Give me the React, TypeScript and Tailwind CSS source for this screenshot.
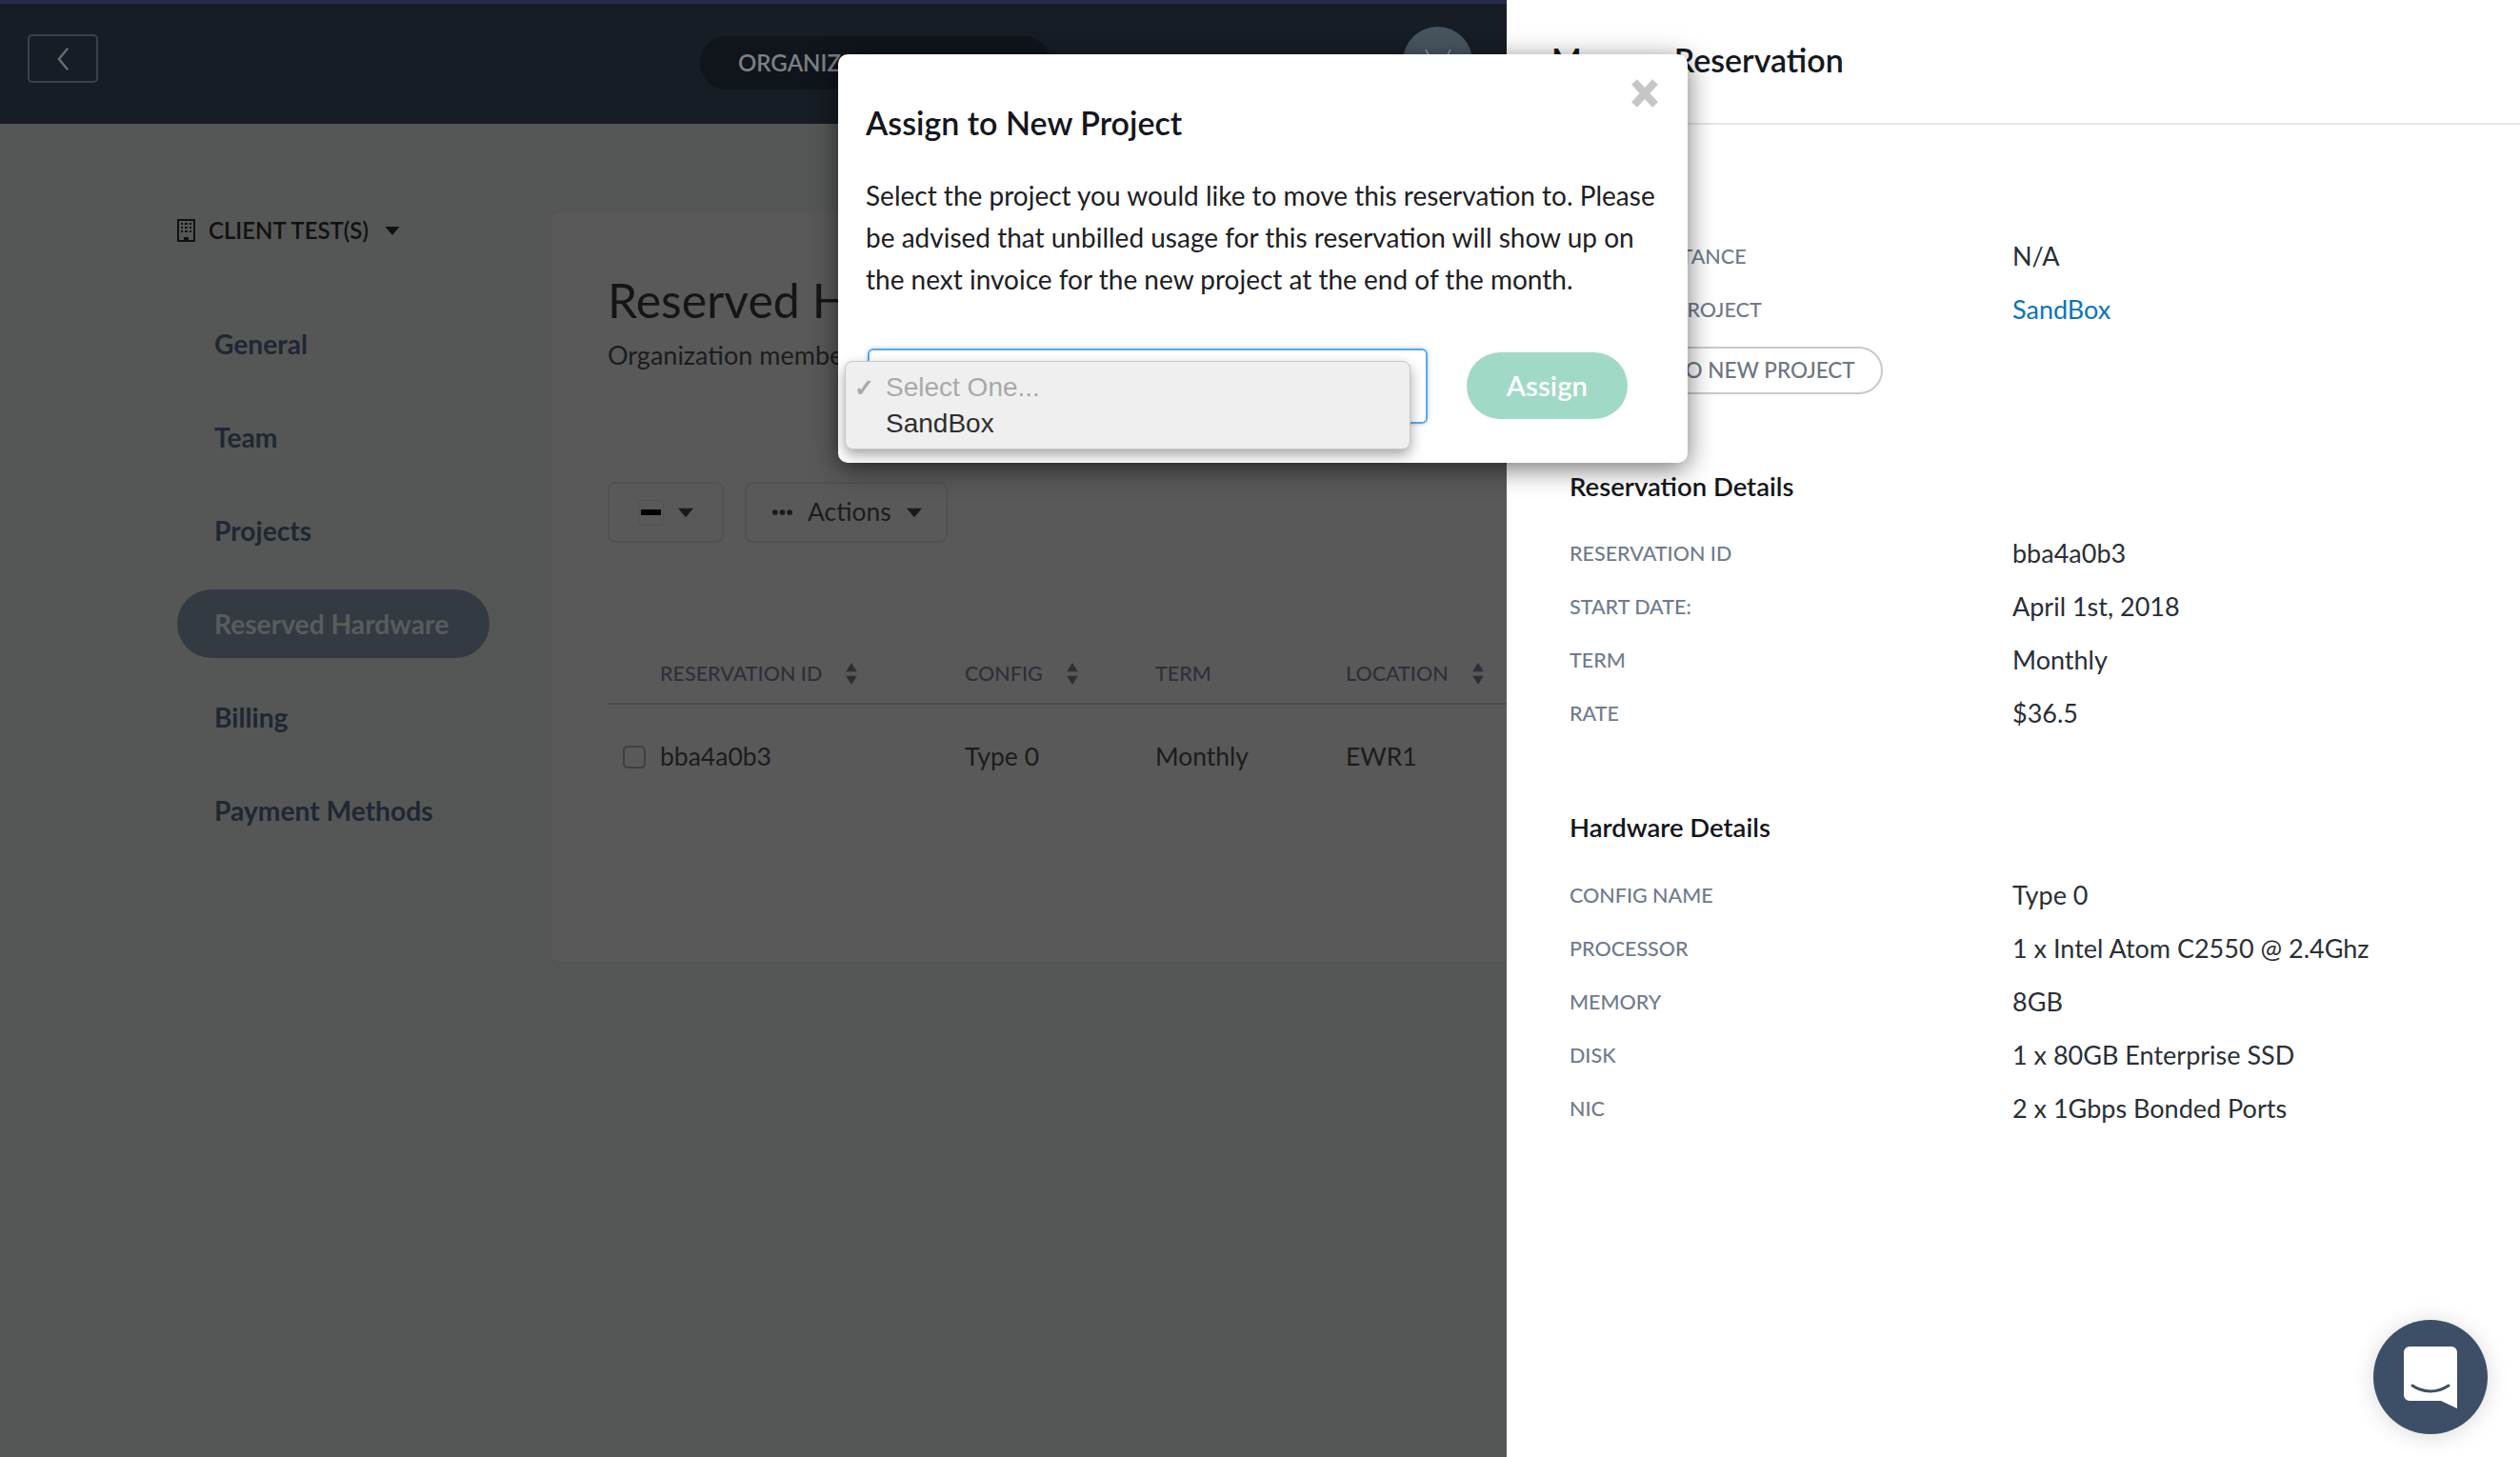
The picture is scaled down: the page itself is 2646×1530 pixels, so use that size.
const Caret = ({ className }: { className: string }) => (
  <svg viewBox="0 0 10 6" className={className} fill="currentColor">
    <path d="M0 0h10L5 6z" />
  </svg>
);

const Sort = () => (
  <svg viewBox="0 0 12 20" className="w-[14px] h-[23px] text-[#2c2f36]" fill="currentColor">
    <path d="M6 0l5 8H1zM6 20l-5-8h10z" />
  </svg>
);

const nav = ["General", "Team", "Projects", "Reserved Hardware", "Billing", "Payment Methods"];

const columns = [
  { name: "RESERVATION ID", w: "w-[320px]", sort: true },
  { name: "CONFIG", w: "w-[200px]", sort: true },
  { name: "TERM", w: "w-[200px]", sort: false },
  { name: "LOCATION", w: "w-[160px]", sort: true },
];

const reservation = [
  ["RESERVATION ID", "bba4a0b3"],
  ["START DATE:", "April 1st, 2018"],
  ["TERM", "Monthly"],
  ["RATE", "$36.5"],
];

const hardware = [
  ["CONFIG NAME", "Type 0"],
  ["PROCESSOR", "1 x Intel Atom C2550 @ 2.4Ghz"],
  ["MEMORY", "8GB"],
  ["DISK", "1 x 80GB Enterprise SSD"],
  ["NIC", "2 x 1Gbps Bonded Ports"],
];

const Row = ({ label, children }: { label: string; children: React.ReactNode }) => (
  <div className="flex items-center h-[56px]">
    <span className="w-[465px] text-[21.5px] font-medium text-[#6f7b8c]">{label}</span>
    <span className="text-[27px] text-[#2a2f36]">{children}</span>
  </div>
);

export default function App() {
  return (
    <div className="relative flex w-[2646px] h-[1530px] overflow-hidden bg-white [font-family:Lato,sans-serif]">
      {/* Dimmed page behind the drawer */}
      <div className="flex flex-col w-[1582px] shrink-0 bg-[#555756]">
        <header className="flex items-start h-[130px] pl-[29px] bg-[#171d25] border-t-4 border-[#272a4d]">
          <button className="flex items-center justify-center mt-[32px] w-[74px] h-[51px] border-2 border-[#3d4249] rounded-[5px] text-[#6a6e73]">
            <svg viewBox="0 0 16 28" className="w-[15px] h-[26px]" fill="none" stroke="currentColor" strokeWidth="2.5">
              <path d="M13 2L3 14l10 12" />
            </svg>
          </button>
          <div className="flex items-center mt-[34px] ml-[632px] w-[368px] h-[56px] pl-[40px] rounded-full bg-[#10151c] text-[24px] font-semibold text-[#7d8084] whitespace-nowrap">
            ORGANIZATION SETTINGS
          </div>
          <span className="mt-[34px] ml-[115px] leading-[56px] text-[24px] font-semibold text-[#7d8084] whitespace-nowrap">PERSONAL SETTINGS</span>
          <div className="flex justify-center mt-[24px] ml-[15px] pt-[22px] w-[73px] h-[73px] rounded-full bg-[#47545f] text-[#9aa2a9]">
            <svg viewBox="0 0 30 30" className="w-[30px] h-[30px]" fill="none" stroke="currentColor" strokeWidth="1.5">
              <path d="M2 2l13 24L28 2" />
            </svg>
          </div>
        </header>

        <div className="flex flex-1 min-h-0">
          <aside className="w-[578px] shrink-0 pl-[186px] pt-[94px]">
            <div className="flex items-center h-[36px] text-[24px] font-semibold text-[#111]">
              <svg viewBox="0 0 19 24" className="w-[19px] h-[24px]" fill="#111">
                <path fillRule="evenodd" d="M0 0h19v24H0zM2 2v20h5v-3h5v3h5V2z" />
                <path d="M4 4h2v2H4zM8 4h3v2H8zM13 4h2v2h-2zM4 8h2v2H4zM8 8h3v2H8zM13 8h2v2h-2zM4 12h2v2H4zM8 12h3v2H8zM13 12h2v2h-2z" />
              </svg>
              <span className="ml-[14px]">CLIENT TEST(S)</span>
              <Caret className="ml-[17px] w-[16px] h-[9px] text-[#111]" />
            </div>
            <nav className="flex flex-col gap-[26px] mt-[65px]">
              {nav.map((item) => {
                const active = item === "Reserved Hardware";
                return (
                  <div
                    key={item}
                    className={`flex items-center w-[328px] h-[72px] pl-[39px] rounded-full text-[28.2px] font-bold whitespace-nowrap ${
                      active ? "bg-[#343a42] text-[#595c5e]" : "text-[#1f2733]"
                    }`}
                  >
                    {item}
                  </div>
                );
              })}
            </nav>
          </aside>

          <main className="flex-1 min-w-0 h-[789px] mt-[92px] pl-[59px] pt-[58px] rounded-tl-[8px] rounded-bl-[8px] bg-[#595959] border border-[#545454] border-r-0 overflow-hidden">
            <h1 className="text-[50px] leading-[68px] text-[#151515] whitespace-nowrap">Reserved Hardware</h1>
            <p className="mt-[6px] text-[27px] leading-[36px] text-[#1c1c1c] whitespace-nowrap">Organization members can manage reservations</p>

            <div className="flex gap-[22px] mt-[115px]">
              <div className="flex items-center w-[122px] h-[64px] pl-[30px] rounded-[8px] border-2 border-[#525252]">
                <span className="flex items-center justify-center w-[27px] h-[27px] rounded-[4px] border border-[#525252]">
                  <span className="w-[21px] h-[6px] bg-black" />
                </span>
                <Caret className="ml-[15px] w-[16px] h-[11px] text-[#1a1a1a]" />
              </div>
              <div className="flex items-center w-[213px] h-[64px] pl-[27px] rounded-[8px] border-2 border-[#525252] text-[26.5px] text-[#1c1c1c]">
                <svg viewBox="0 0 22 6" className="w-[21px] h-[6px]" fill="#1a1a1a">
                  <circle cx="3" cy="3" r="3" />
                  <circle cx="11" cy="3" r="3" />
                  <circle cx="19" cy="3" r="3" />
                </svg>
                <span className="ml-[16px]">Actions</span>
                <Caret className="ml-[16px] w-[16px] h-[11px] text-[#1a1a1a]" />
              </div>
            </div>

            <div className="flex items-center h-[64px] mt-[106px] pl-[55px] border-b-2 border-[#4c4c4c] whitespace-nowrap">
              {columns.map((col) => (
                <div key={col.name} className={`flex items-center gap-[24px] ${col.w} text-[21.5px] font-medium text-[#2d3038]`}>
                  {col.name}
                  {col.sort && <Sort />}
                </div>
              ))}
            </div>
            <div className="flex items-center h-[110px] pl-[16px] text-[26.5px] text-[#1c1c1c] whitespace-nowrap">
              <span className="w-[24px] h-[24px] mr-[15px] rounded-[5px] border-2 border-[#3f3f3f]" />
              <span className="w-[320px]">bba4a0b3</span>
              <span className="w-[200px]">Type 0</span>
              <span className="w-[200px]">Monthly</span>
              <span>EWR1</span>
            </div>
          </main>
        </div>
      </div>

      {/* Manage Reservation drawer */}
      <section className="flex-1 min-w-0">
        <div className="flex items-center h-[131px] pl-[47px] pb-[4px] border-b-2 border-[#e6e6e6] text-[34px] font-semibold text-[#16181c]">
          Manage Reservation
        </div>
        <div className="pl-[66px] pt-[110px]">
          <Row label="LINKED INSTANCE">N/A</Row>
          <Row label="ASSIGNED PROJECT">
            <span className="text-[#0b72bd]">SandBox</span>
          </Row>
          <button className="flex items-center h-[50px] w-[329px] mt-[11px] pl-[22px] rounded-full border-2 border-[#c9c9c9] text-[22.5px] font-medium text-[#6f7680] whitespace-nowrap">
            ASSIGN TO NEW PROJECT
          </button>

          <h2 className="mt-[78px] mb-[23px] text-[27.5px] leading-[38px] font-semibold text-[#14161a]">Reservation Details</h2>
          {reservation.map(([label, value]) => (
            <Row key={label} label={label}>{value}</Row>
          ))}

          <h2 className="mt-[73px] mb-[24px] text-[27.5px] leading-[38px] font-semibold text-[#14161a]">Hardware Details</h2>
          {hardware.map(([label, value]) => (
            <Row key={label} label={label}>{value}</Row>
          ))}
        </div>
      </section>

      {/* Assign modal */}
      <div className="absolute left-[880px] top-[57px] w-[892px] h-[429px] pl-[29px] pt-[53px] rounded-[10px] bg-white shadow-[0_6px_28px_rgba(0,0,0,0.55)]">
        <svg viewBox="0 0 30 30" className="absolute right-[30px] top-[26px] w-[30px] h-[30px]" fill="none" stroke="#c6c6c6" strokeWidth="8">
          <path d="M4 3l22 24M26 3L4 27" />
        </svg>
        <h2 className="text-[34px] leading-[38px] font-semibold text-[#14161a]">Assign to New Project</h2>
        <p className="mt-[35px] w-[840px] text-[28px] leading-[44px] text-[#1d2024]">
          Select the project you would like to move this reservation to. Please be advised that unbilled usage for this reservation will show up on the next invoice for the new project at the end of the month.
        </p>
        <div className="flex items-start mt-[51px]">
          <div className="w-[588px] h-[79px] ml-[2px] rounded-[6px] border-2 border-[#5ea9e8] shadow-[0_0_4px_rgba(94,169,232,0.6)]" />
          <button className="flex items-center justify-center w-[169px] h-[70px] mt-[4px] ml-[41px] rounded-full bg-[#a1d9c7] text-[29.5px] font-semibold text-white">
            Assign
          </button>
        </div>

        {/* Native select popup over the field */}
        <div className="absolute left-[7px] top-[322px] w-[594px] h-[93px] rounded-[8px] border border-[#c6c6c6] bg-[#efefef] pt-[8px] shadow-[0_6px_14px_rgba(0,0,0,0.35)] text-[28px] leading-[38px] [font-family:'Liberation_Sans',sans-serif]">
          <div className="flex items-center text-[#a9a9a9]">
            <span className="w-[42px] pl-[9px] text-[25px] font-bold">✓</span>
            Select One...
          </div>
          <div className="pl-[42px] text-[#2e2e2e]">SandBox</div>
        </div>
      </div>

      {/* Chat launcher */}
      <div className="absolute left-[2492px] top-[1386px] flex items-center justify-center w-[120px] h-[120px] rounded-full bg-[#3d4f66] shadow-[0_2px_24px_rgba(0,0,0,0.15)]">
        <svg viewBox="0 0 56 65" className="w-[56px] h-[65px]">
          <path d="M6 0h44a6 6 0 0 1 6 6v59L39 57H6a6 6 0 0 1-6-6V6a6 6 0 0 1 6-6z" fill="#fff" />
          <path d="M9 41c12 8 26 8 38 0" fill="none" stroke="#3d4f66" strokeWidth="3" strokeLinecap="round" />
        </svg>
      </div>
    </div>
  );
}
